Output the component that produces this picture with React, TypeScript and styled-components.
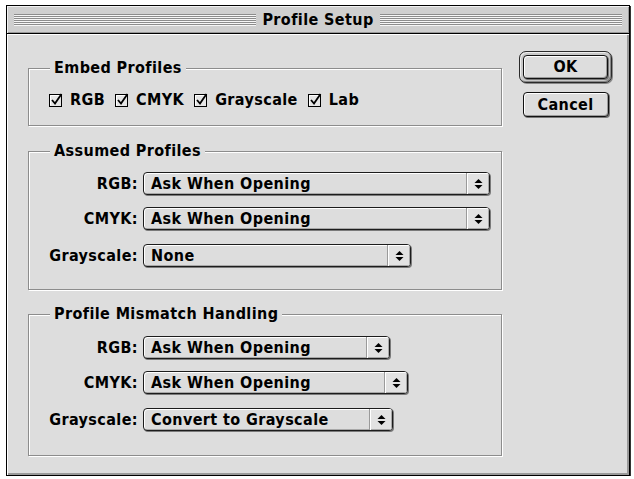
import styled, { createGlobalStyle } from 'styled-components';

const GlobalStyle = createGlobalStyle`
  html, body {
    margin: 0;
    padding: 0;
    background: #ffffff;
  }
  body {
    font-family: "DejaVu Sans Condensed", "DejaVu Sans", sans-serif;
    font-stretch: condensed;
    font-weight: bold;
    font-size: 16px;
    letter-spacing: 0.4px;
    color: #000;
  }
`;

const Window = styled.div`
  box-sizing: border-box;
  margin: 5px 0 0 6px;
  width: 624px;
  height: 471px;
  border: 1px solid #000;
  box-shadow: 1px 1px 0 #333;
  background: #dddddd;
  display: flex;
  flex-direction: column;
`;

const TitleBar = styled.div`
  box-sizing: border-box;
  height: 28px;
  flex: none;
  display: flex;
  align-items: center;
  gap: 6px;
  padding: 0 7px;
  background: #cfcfcf;
  border-bottom: 1px solid #000;
  box-shadow: inset 1px 1px 0 #f2f2f2, inset -1px -1px 0 #999;
`;

const Stripes = styled.div`
  flex: 1;
  height: 12px;
  background: repeating-linear-gradient(
    to bottom,
    #8c8c8c 0 1px,
    #f6f6f6 1px 2px
  );
`;

const Title = styled.span`
  line-height: 16px;
`;

const Body = styled.div`
  flex: 1;
  display: flex;
  gap: 17px;
  padding: 18px 17px 0 21px;
  box-shadow: inset 1px 1px 0 #fff, inset -2px -2px 0 #999;
`;

const Groups = styled.div`
  width: 474px;
  padding-top: 8px;
  display: flex;
  flex-direction: column;
`;

const Group = styled.fieldset<{ $pt: number; $pb: number; $mt?: number }>`
  margin: ${(p) => p.$mt ?? 0}px 0 0 0;
  padding: ${(p) => p.$pt}px 0 ${(p) => p.$pb}px 0;
  min-width: 0;
  border: 1px solid #8c8c8c;
  box-shadow: 1px 1px 0 #fff, inset 1px 1px 0 #fff;
`;

const Legend = styled.legend`
  margin-left: 21px;
  padding: 0 4px;
  line-height: 16px;
  background: #dddddd;
`;

const CheckRow = styled.div`
  display: flex;
  align-items: center;
  gap: 10px;
  padding-left: 20px;
  height: 16px;
`;

const Check = styled.label`
  display: flex;
  align-items: center;
  gap: 7px;
  line-height: 16px;
`;

const Rows = styled.div`
  display: flex;
  flex-direction: column;
`;

const Row = styled.div<{ $mt?: number }>`
  display: grid;
  grid-template-columns: 109px auto;
  column-gap: 5px;
  align-items: center;
  justify-items: start;
  margin-top: ${(p) => p.$mt ?? 0}px;
`;

const RowLabel = styled.span`
  justify-self: end;
  line-height: 16px;
`;

const Popup = styled.div<{ $w: number }>`
  box-sizing: border-box;
  width: ${(p) => p.$w}px;
  height: 23px;
  display: flex;
  border: 1px solid #1c1c1c;
  border-radius: 4px;
  background: #dddddd;
  box-shadow: 1px 1px 0 #7a7a7a, inset 1px 1px 0 #fff, inset -1px -1px 0 #a8a8a8;
  overflow: hidden;
`;

const PopupText = styled.span`
  flex: 1;
  display: flex;
  align-items: center;
  padding-left: 7px;
  line-height: 16px;
  white-space: nowrap;
`;

const PopupArrows = styled.span`
  width: 22px;
  flex: none;
  display: flex;
  align-items: center;
  justify-content: center;
  border-left: 1px solid #9a9a9a;
  background: #e2e2e2;
  box-shadow: inset 1px 1px 0 #fff, inset -1px -1px 0 #a8a8a8;
`;

const Buttons = styled.div`
  width: 93px;
  display: flex;
  flex-direction: column;
  align-items: center;
  gap: 9px;
`;

const DefaultRing = styled.div`
  box-sizing: border-box;
  width: 93px;
  height: 32px;
  margin-top: -1px;
  padding: 3px;
  border: 1px solid #2a2a2a;
  border-radius: 7px;
  background: #c8c8c8;
  box-shadow: inset 1px 1px 0 #eee, inset -1px -1px 0 #888, 1px 1px 0 #888;
  display: flex;
`;

const Button = styled.button<{ $w?: number; $h?: number }>`
  box-sizing: border-box;
  width: ${(p) => (p.$w ? `${p.$w}px` : '100%')};
  height: ${(p) => (p.$h ? `${p.$h}px` : '100%')};
  border: 1px solid #111;
  border-radius: 4px;
  background: #dddddd;
  box-shadow: inset 1px 1px 0 #fff, inset -1px -1px 0 #9a9a9a, 1px 1px 0 #777;
  font: inherit;
  letter-spacing: inherit;
  color: #000;
  padding: 0;
  line-height: 16px;
`;

const CheckBox = () => (
  <svg width="14" height="14" viewBox="0 0 14 14">
    <rect x="0.5" y="1.5" width="12" height="12" fill="#e6e6e6" stroke="#000" />
    <path d="M1.5 12.5 V2.5 H11.5" stroke="#fff" fill="none" />
    <path d="M3 7 L6 10.5 L12.5 1" stroke="#000" strokeWidth="1.8" fill="none" />
  </svg>
);

const Arrows = () => (
  <svg width="9" height="12" viewBox="0 0 9 12">
    <path d="M0.5 5 L4.5 1 L8.5 5 Z" fill="#000" />
    <path d="M0.5 7 L8.5 7 L4.5 11 Z" fill="#000" />
  </svg>
);

const Select = ({ value, width }: { value: string; width: number }) => (
  <Popup $w={width}>
    <PopupText>{value}</PopupText>
    <PopupArrows>
      <Arrows />
    </PopupArrows>
  </Popup>
);

type Field = { label: string; value: string; width: number };

const FieldRows = ({ fields }: { fields: Field[] }) => (
  <Rows>
    {fields.map((f, i) => (
      <Row key={f.label} $mt={i === 0 ? 0 : i === 1 ? 12 : 14}>
        <RowLabel>{f.label}</RowLabel>
        <Select value={f.value} width={f.width} />
      </Row>
    ))}
  </Rows>
);

const assumed: Field[] = [
  { label: 'RGB:', value: 'Ask When Opening', width: 347 },
  { label: 'CMYK:', value: 'Ask When Opening', width: 347 },
  { label: 'Grayscale:', value: 'None', width: 268 },
];

const mismatch: Field[] = [
  { label: 'RGB:', value: 'Ask When Opening', width: 247 },
  { label: 'CMYK:', value: 'Ask When Opening', width: 265 },
  { label: 'Grayscale:', value: 'Convert to Grayscale', width: 250 },
];

const App = () => {
  return (
    <>
      <GlobalStyle />
      <Window>
        <TitleBar>
          <Stripes />
          <Title>Profile Setup</Title>
          <Stripes />
        </TitleBar>
        <Body>
          <Groups>
            <Group $pt={16} $pb={17}>
              <Legend>Embed Profiles</Legend>
              <CheckRow>
                {['RGB', 'CMYK', 'Grayscale', 'Lab'].map((name) => (
                  <Check key={name}>
                    <CheckBox />
                    {name}
                  </Check>
                ))}
              </CheckRow>
            </Group>
            <Group $mt={17} $pt={13} $pb={22}>
              <Legend>Assumed Profiles</Legend>
              <FieldRows fields={assumed} />
            </Group>
            <Group $mt={16} $pt={14} $pb={24}>
              <Legend>Profile Mismatch Handling</Legend>
              <FieldRows fields={mismatch} />
            </Group>
          </Groups>
          <Buttons>
            <DefaultRing>
              <Button>OK</Button>
            </DefaultRing>
            <Button $w={86} $h={25}>
              Cancel
            </Button>
          </Buttons>
        </Body>
      </Window>
    </>
  );
};

export default App;
